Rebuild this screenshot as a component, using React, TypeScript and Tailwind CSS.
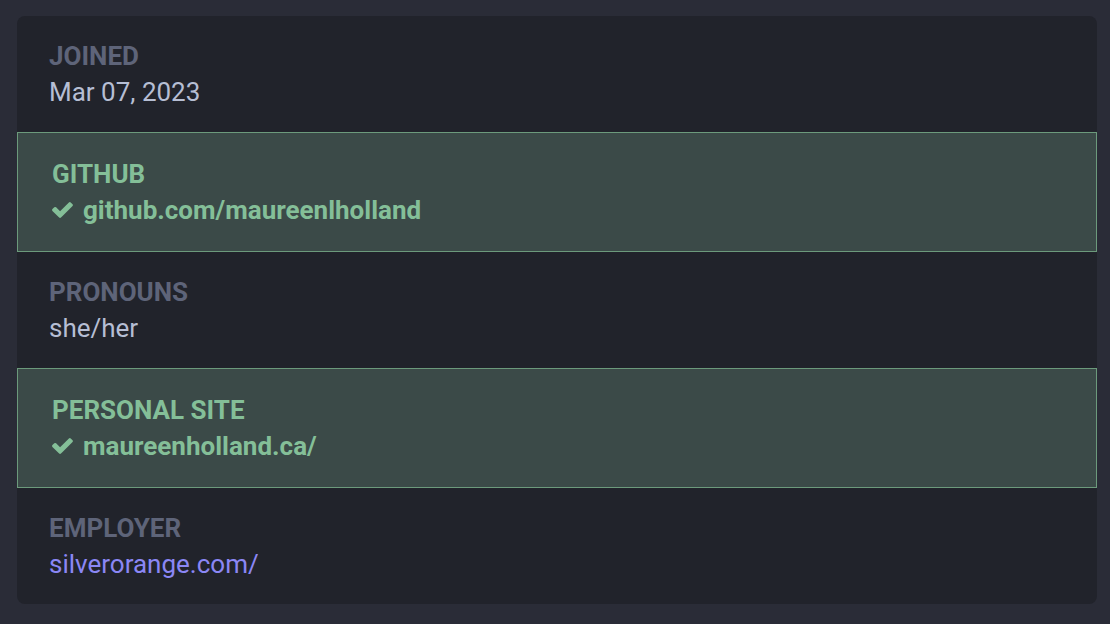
type Row = {
  label: string;
  value: string;
  kind: "plain" | "verified" | "link";
};

const rows: Row[] = [
  { label: "Joined", value: "Mar 07, 2023", kind: "plain" },
  { label: "GitHub", value: "github.com/maureenlholland", kind: "verified" },
  { label: "Pronouns", value: "she/her", kind: "plain" },
  { label: "Personal site", value: "maureenholland.ca/", kind: "verified" },
  { label: "Employer", value: "silverorange.com/", kind: "link" },
];

const CheckIcon = () => (
  <svg viewBox="121 334 1550 1188" className="w-[21px] h-[16px] shrink-0" fill="currentColor">
    <path d="M1671 566q0 40-28 68l-724 724-136 136q-28 28-68 28t-68-28l-136-136-362-362q-28-28-28-68t28-68l136-136q28-28 68-28t68 28l294 295 656-657q28-28 68-28t68 28l136 136q28 28 28 68z" />
  </svg>
);

const ProfileRow = ({ row }: { row: Row }) => {
  if (row.kind === "verified") {
    return (
      <div className="border border-[#6c9a7c] bg-[#3b4a48] pl-[34px] pr-8 pt-[23px] pb-[23px] text-[#84bf98]">
        <dt className="text-[26px] leading-[36px] font-bold uppercase">{row.label}</dt>
        <dd className="flex items-center gap-[10px] text-[26px] leading-[36px] font-bold">
          <CheckIcon />
          {row.value}
        </dd>
      </div>
    );
  }

  return (
    <div className="px-8 py-[22px]">
      <dt className="text-[26px] leading-[36px] font-bold uppercase text-[#5e6479]">{row.label}</dt>
      <dd
        className={`text-[26px] leading-[36px] ${
          row.kind === "link" ? "text-[#8b87f5]" : "text-[#b6bed4]"
        }`}
      >
        {row.value}
      </dd>
    </div>
  );
};

const App = () => {
  return (
    <main className="min-h-screen w-full bg-[#2a2c37] pt-4 pl-[17px] font-['Roboto',sans-serif]">
      <dl className="w-[1080px] rounded-lg bg-[#21232b] overflow-hidden">
        {rows.map((row) => (
          <ProfileRow key={row.label} row={row} />
        ))}
      </dl>
    </main>
  );
};

export default App;
